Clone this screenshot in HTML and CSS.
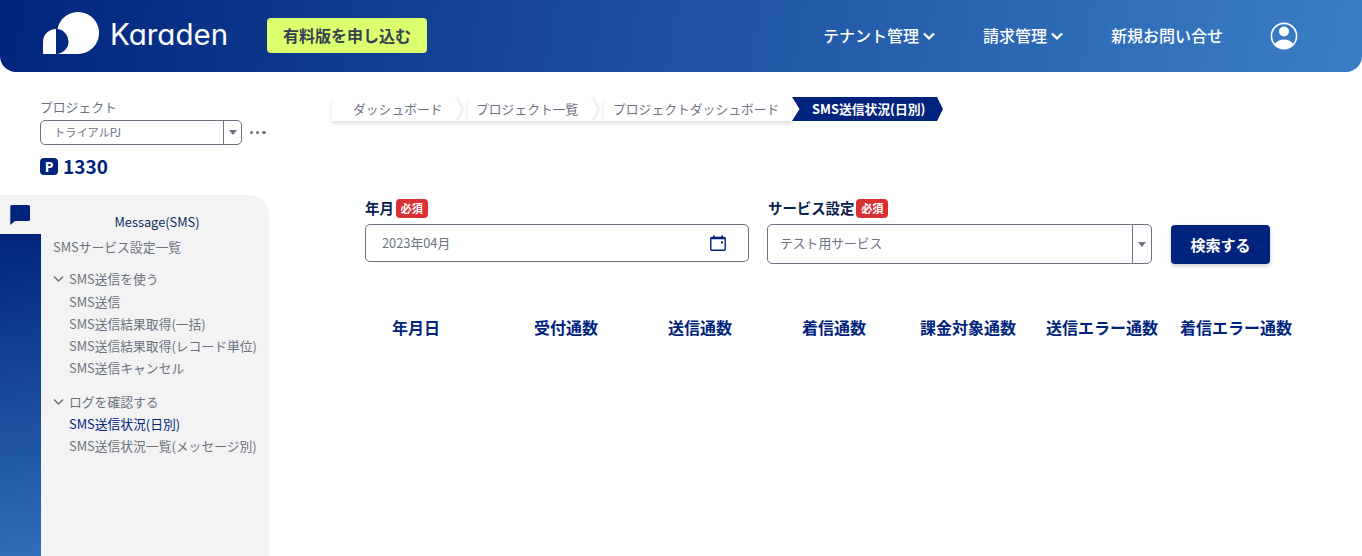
FILE: index.html
```html
<!DOCTYPE html>
<html lang="ja">
<head>
<meta charset="utf-8">
<title>SMS送信状況(日別)</title>
<link rel="stylesheet" href="styles.css">
</head>
<body>
<header class="header">
  <div class="brand">
    <svg class="logo-mark" width="56" height="42" viewBox="0 0 56 42"><path fill="#fff" d="M0 42V30A13 13 0 0 1 13 17V42ZM13 42A12.500 12.500 0 0 0 14.400 17.080A21 21 0 1 1 35 42Z"/></svg>
    <span class="logo-text">Karaden</span>
  </div>
  <a class="cta">有料版を申し込む</a>
  <nav class="nav">
    <a class="nav-item nav-tenant">テナント管理<svg class="nav-chev" width="14" height="10" viewBox="0 0 14 10"><path d="M2 2.500l5 5 5-5" fill="none" stroke="#fff" stroke-width="2.200"/></svg></a>
    <a class="nav-item nav-bill">請求管理<svg class="nav-chev" width="14" height="10" viewBox="0 0 14 10"><path d="M2 2.500l5 5 5-5" fill="none" stroke="#fff" stroke-width="2.200"/></svg></a>
    <a class="nav-item nav-contact">新規お問い合せ</a>
    <svg class="avatar" width="28" height="28" viewBox="0 0 28 28"><circle cx="14" cy="14" r="12.600" fill="none" stroke="#fff" stroke-width="1.600"/><circle cx="14" cy="9.500" r="5" fill="#fff"/><path fill="#fff" d="M5 22C6.500 19 10 17.500 14 17.500S21.500 19 23 22C21 25 17.500 26.500 14 26.500S7 25 5 22Z"/></svg>
  </nav>
</header>

<div class="page">
  <aside class="aside">
    <div class="project">
      <div class="project-label">プロジェクト</div>
      <div class="project-row">
        <div class="select select-project"><span class="select-value">トライアルPJ</span><span class="select-arrow"><i class="caret"></i></span></div>
        <span class="dots"><i></i><i></i><i></i></span>
      </div>
      <div class="points"><span class="points-badge">P</span><span class="points-value">1330</span></div>
    </div>
    <div class="side">
      <div class="rail">
        <div class="rail-tab">
          <svg width="21" height="21" viewBox="0 0 21 21"><path fill="#00247d" d="M1.500 0H18.500a1.500 1.500 0 0 1 1.500 1.500V14.500A1.500 1.500 0 0 1 18.500 16H5L.3 20V1.500A1.500 1.500 0 0 1 1.500 0Z"/></svg>
        </div>
        <div class="rail-fill"></div>
      </div>
      <div class="menu">
        <div class="menu-title">Message(SMS)</div>
        <a class="menu-link menu-top">SMSサービス設定一覧</a>
        <div class="menu-group">
          <div class="menu-head"><svg width="11" height="8" viewBox="0 0 11 8"><path d="M1 1.500l4.500 4.500 4.500-4.500" fill="none" stroke="#6b7280" stroke-width="1.500"/></svg>SMS送信を使う</div>
          <a class="menu-link sub">SMS送信</a>
          <a class="menu-link sub">SMS送信結果取得(一括)</a>
          <a class="menu-link sub">SMS送信結果取得(レコード単位)</a>
          <a class="menu-link sub">SMS送信キャンセル</a>
        </div>
        <div class="menu-group">
          <div class="menu-head"><svg width="11" height="8" viewBox="0 0 11 8"><path d="M1 1.500l4.500 4.500 4.500-4.500" fill="none" stroke="#6b7280" stroke-width="1.500"/></svg>ログを確認する</div>
          <a class="menu-link sub active">SMS送信状況(日別)</a>
          <a class="menu-link sub">SMS送信状況一覧(メッセージ別)</a>
        </div>
      </div>
    </div>
  </aside>

  <main class="main">
    <ol class="crumbs">
      <li class="crumb crumb-1">ダッシュボード</li>
      <li class="crumb crumb-2">プロジェクト一覧</li>
      <li class="crumb crumb-3">プロジェクトダッシュボード</li>
      <li class="crumb-current">SMS送信状況(日別)</li>
    </ol>
    <form class="search">
      <div class="field field-date">
        <div class="field-label">年月<span class="req">必須</span></div>
        <div class="input-date"><span>2023年04月</span>
          <svg class="cal" width="18" height="18" viewBox="0 0 18 18"><rect x="1.800" y="3.500" width="14.400" height="12.800" rx="1" fill="none" stroke="#00247d" stroke-width="1.400"/><path stroke="#00247d" stroke-width="1.800" d="M2 4.300H16M5 1.500V3.500M13 1.500V3.500"/><rect x="12" y="7.500" width="2" height="2" fill="#00247d"/></svg>
        </div>
      </div>
      <div class="field field-service">
        <div class="field-label">サービス設定<span class="req">必須</span></div>
        <div class="select select-service"><span class="select-value">テスト用サービス</span><span class="select-arrow"><i class="caret"></i></span></div>
      </div>
      <button class="btn" type="button">検索する</button>
    </form>
    <table class="table">
      <thead>
        <tr>
          <th class="col-date">年月日</th><th>受付通数</th><th>送信通数</th><th>着信通数</th><th>課金対象通数</th><th>送信エラー通数</th><th>着信エラー通数</th>
        </tr>
      </thead>
    </table>
  </main>
</div>
</body>
</html>
```
FILE: styles.css
```css
* { box-sizing: border-box; }
html, body { margin: 0; height: 100%; }
body {
  font-family: "Noto Sans CJK JP", "Noto Sans", sans-serif;
  color: #6b7280;
  background: #fff;
  overflow: hidden;
}
a { color: inherit; text-decoration: none; }

.header {
  height: 72px;
  display: flex;
  align-items: center;
  padding: 0 64px 0 43px;
  border-radius: 0 0 16px 16px;
  background: linear-gradient(100deg, #00247d 0%, #3a7fc6 100%);
  color: #fff;
}
.brand { display: flex; align-items: center; width: 224px; }
.logo-mark { display: block; margin-top: -6px; }
.logo-text {
  font-family: "Inter", sans-serif;
  font-feature-settings: "cv11" 1;
  font-size: 29.500px;
  font-weight: 400;
  line-height: 34px;
  margin: -5px 0 0 11px;
}
.cta {
  width: 160px;
  height: 35px;
  margin-top: -1px;
  border-radius: 4px;
  background: #dcff6e;
  color: #374151;
  font-size: 16px;
  font-weight: 700;
  line-height: 35px;
  text-align: center;
}
.nav { margin-left: auto; display: flex; align-items: center; }
.nav-item { font-size: 16px; font-weight: 500; line-height: 22px; display: flex; align-items: center; margin-top: -2px; }
.nav-chev { margin-left: 3px; margin-top: 2px; }
.nav-tenant { margin-right: 47px; }
.nav-bill { margin-right: 47px; }
.nav-contact { margin-right: 47px; }
.avatar { display: block; margin-top: -1px; }

.page { display: flex; height: 484px; }
.aside { width: 269px; flex: none; display: flex; flex-direction: column; }
.project { height: 123px; padding: 25px 0 0 40px; }
.project-label { font-size: 12.800px; line-height: 19px; margin-bottom: 4px; }
.project-row { display: flex; align-items: center; }
.select {
  display: flex;
  justify-content: space-between;
  background: #fff;
  border: 1px solid #6b7280;
  border-radius: 5px;
}
.select-project { width: 202px; height: 25px; font-size: 11.200px; line-height: 23px; }
.select-project .select-value { padding-left: 13px; }
.select-arrow { display: flex; align-items: center; justify-content: center; border-left: 1px solid #6b7280; }
.select-project .select-arrow { width: 18px; }
.caret { display: block; width: 0; height: 0; border: 4px solid transparent; border-top: 5px solid #6b7280; border-bottom: 0; }
.dots { display: flex; gap: 3px; margin-left: 8px; }
.dots i { display: block; width: 3.200px; height: 3.200px; border-radius: 50%; background: #6b7280; }
.points { display: flex; align-items: center; margin-top: 7px; color: #00247d; }
.points-badge {
  width: 18px; height: 17px; border-radius: 4px; background: #00247d; color: #fff;
  font-size: 14px; font-weight: 700; line-height: 17px; text-align: center; font-family: "Noto Sans", sans-serif;
}
.points-value { font-size: 19px; font-weight: 700; line-height: 28px; margin-left: 5px; }

.side {
  flex: 1;
  display: flex;
  background: #f3f3f3;
  border-top-right-radius: 20px;
}
.rail { width: 41px; flex: none; display: flex; flex-direction: column; }
.rail-tab { height: 39px; padding: 10px 0 0 10px; }
.rail-tab svg { display: block; }
.rail-fill { flex: 1; background: linear-gradient(170deg, #00247d 0%, #2f6fb8 100%); }
.menu { flex: 1; padding: 17px 0 0 12px; font-size: 12.800px; }
.menu-title { color: #0b2a5c; text-align: center; line-height: 20px; padding-right: 8px; }
.menu-link { display: block; line-height: 22.200px; white-space: nowrap; }
.menu-top { margin-top: 4px; }
.menu-group { margin-top: 10px; }
.menu-group .menu-head { margin-bottom: .6px; }
.menu-group + .menu-group { margin-top: 10.900px; }
.menu-group + .menu-group .menu-head { margin-bottom: 0; }
.menu-head { display: flex; align-items: center; line-height: 22px; white-space: nowrap; }
.menu-head svg { margin-right: 5px; }
.sub { padding-left: 16px; }
.active { color: #00247d; }

.main { flex: 1; min-width: 0; padding: 25px 0 0 63px; }
.crumbs {
  display: flex;
  list-style: none;
  margin: 0;
  padding: 0;
  height: 24px;
  font-size: 12.800px;
  line-height: 23px;
}
.crumb {
  background: #fff;
  height: 24px;
  box-shadow: 0 3px 4px rgba(0,0,0,.12);
  position: relative;
  white-space: nowrap;
}
.crumb-1::after, .crumb-2::after {
  content: "";
  position: absolute;
  right: 3px;
  top: 0;
  width: 10px;
  height: 24px;
  background: #f3f3f3;
  filter: blur(.4px);
  clip-path: polygon(0 0, 35% 0, 100% 50%, 35% 100%, 0 100%, 60% 50%);
}
.crumb-1 { width: 136px; padding-left: 21px; }
.crumb-2 { width: 136px; padding-left: 8px; }
.crumb-3 { width: 188px; padding-left: 9px; }
.crumb-current {
  height: 24px;
  width: 151px;
  padding-left: 20px;
  color: #fff;
  font-weight: 700;
  background: #00247d;
  white-space: nowrap;
  clip-path: polygon(0 0, 145px 0, 100% 50%, 145px 100%, 0 100%, 7.500px 50%);
}
.search { display: flex; align-items: flex-start; margin: 77px 0 0 33px; }
.field-label {
  display: flex;
  align-items: center;
  color: #0b2050;
  font-size: 14.400px;
  font-weight: 700;
  line-height: 20px;
  margin-bottom: 6px;
}
.req {
  width: 32px;
  height: 19px;
  margin-left: 2px;
  border-radius: 4px;
  background: #d93033;
  color: #fff;
  font-size: 11.200px;
  font-weight: 700;
  line-height: 19px;
  text-align: center;
}
.field-date { width: 384px; margin-right: 18px; }
.input-date {
  height: 38px;
  border: 1px solid #6b7280;
  border-radius: 5px;
  padding: 0 21px 2px 16px;
  display: flex;
  align-items: center;
  justify-content: space-between;
  font-size: 12.800px;
}
.cal { margin-top: 1px; }
.field-service { width: 385px; margin-right: 19px; }
.field-service .field-label { padding-left: 1px; }
.select-service { height: 40px; font-size: 12.800px; line-height: 36px; }
.select-service .select-value { padding-left: 12px; }
.select-service .select-arrow { width: 19px; }
.btn {
  width: 99px;
  height: 39px;
  margin-top: 27px;
  padding: 0;
  border: 0;
  border-radius: 4px;
  background: #00247d;
  color: #fff;
  font: 700 15px "Noto Sans CJK JP", sans-serif;
  box-shadow: 0 2px 4px rgba(0,0,0,.2);
}
.table {
  margin: 52px 0 0 17px;
  width: 954px;
  table-layout: fixed;
  border-collapse: collapse;
}
.table th {
  width: 134px;
  padding: 0;
  color: #00247d;
  font-size: 16px;
  font-weight: 700;
  line-height: 22px;
  text-align: center;
  white-space: nowrap;
}
.table th.col-date { width: 150px; padding-right: 16px; }
```
